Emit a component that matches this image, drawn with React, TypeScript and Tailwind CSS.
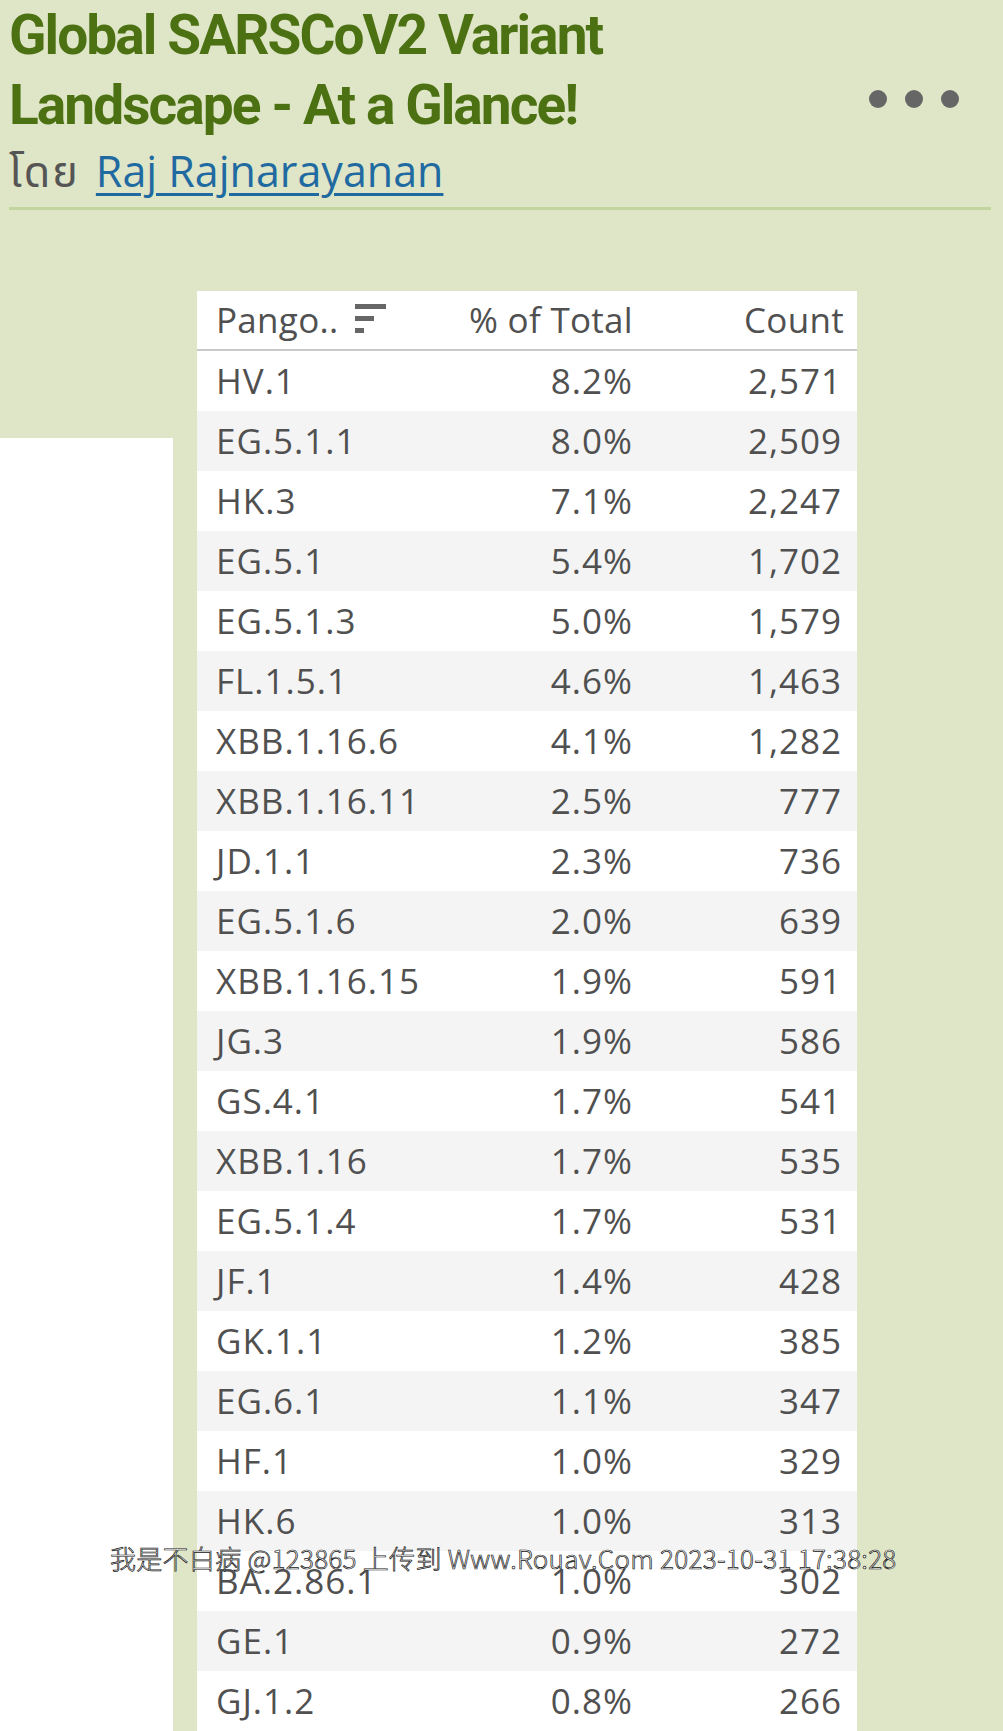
import React from "react";

const rows: [string, string, string][] = [
  ["HV.1", "8.2%", "2,571"],
  ["EG.5.1.1", "8.0%", "2,509"],
  ["HK.3", "7.1%", "2,247"],
  ["EG.5.1", "5.4%", "1,702"],
  ["EG.5.1.3", "5.0%", "1,579"],
  ["FL.1.5.1", "4.6%", "1,463"],
  ["XBB.1.16.6", "4.1%", "1,282"],
  ["XBB.1.16.11", "2.5%", "777"],
  ["JD.1.1", "2.3%", "736"],
  ["EG.5.1.6", "2.0%", "639"],
  ["XBB.1.16.15", "1.9%", "591"],
  ["JG.3", "1.9%", "586"],
  ["GS.4.1", "1.7%", "541"],
  ["XBB.1.16", "1.7%", "535"],
  ["EG.5.1.4", "1.7%", "531"],
  ["JF.1", "1.4%", "428"],
  ["GK.1.1", "1.2%", "385"],
  ["EG.6.1", "1.1%", "347"],
  ["HF.1", "1.0%", "329"],
  ["HK.6", "1.0%", "313"],
  ["BA.2.86.1", "1.0%", "302"],
  ["GE.1", "0.9%", "272"],
  ["GJ.1.2", "0.8%", "266"],
];

function SortIcon() {
  return (
    <svg width="32" height="30" viewBox="0 0 32 30" className="ml-[16px] mt-[-2px] shrink-0">
      <rect x="0" y="0" width="31" height="5" fill="#666" />
      <rect x="0" y="12" width="19" height="5" fill="#666" />
      <rect x="0" y="24" width="9" height="5" fill="#666" />
    </svg>
  );
}

export default function App() {
  return (
    <div className="relative w-[1003px] h-[1731px] overflow-hidden bg-[#dfe5c7] flex flex-col">
      {/* Header */}
      <div className="pl-[9px] pr-[12px]">
        <div className="flex items-start">
          <h1
            className="text-[55px] leading-[70px] font-bold tracking-[-0.035em] text-[#4b7112]"
            style={{ fontFamily: "Roboto, 'Liberation Sans', sans-serif" }}
          >
            Global SARSCoV2 Variant
            <br />
            Landscape - At a Glance!
          </h1>
          <div className="ml-auto mr-[32px] mt-[90px] flex gap-[18px]">
            <span className="w-[18px] h-[18px] rounded-full bg-[#666666]" />
            <span className="w-[18px] h-[18px] rounded-full bg-[#666666]" />
            <span className="w-[18px] h-[18px] rounded-full bg-[#666666]" />
          </div>
        </div>
        <div
          className="mt-[3px] text-[43px] leading-[56px] text-[#555555] flex items-baseline"
          style={{ fontFamily: "'Open Sans', 'Noto Sans Thai', 'Noto Sans', 'DejaVu Sans', sans-serif" }}
        >
          <span className="tracking-[2px]">โดย</span>
          <a className="ml-[16px] text-[#1f6aa1] underline decoration-[3px] underline-offset-[6px]">
            Raj Rajnarayanan
          </a>
        </div>
        <div className="mt-[8px] h-[3px] bg-[#c3d59e]" />
      </div>

      {/* Body */}
      <div className="flex flex-1 pt-[81px] items-stretch">
        <div className="w-[173px] mt-[147px] bg-white shrink-0" />
        <div
          className="ml-[24px] w-[660px] text-[35px] text-[#505050]"
          style={{ fontFamily: "'Open Sans', 'Noto Sans', sans-serif" }}
        >
          <div className="h-[60px] bg-white border-b-[2px] border-[#c9c9c9] flex items-center tracking-[0.3px]">
            <div className="w-[260px] pl-[19px] flex items-center">
              <span>Pango..</span>
              <SortIcon />
            </div>
            <div className="w-[176px] text-right">% of Total</div>
            <div className="flex-1 text-right pr-[13px]">Count</div>
          </div>
          {rows.map((r, i) => (
            <div
              key={r[0]}
              className={`h-[60px] flex items-center tracking-[1px] ${i % 2 === 1 ? "bg-[#f4f4f4]" : "bg-white"}`}
            >
              <div className="w-[260px] pl-[19px]">{r[0]}</div>
              <div className="w-[176px] text-right">{r[1]}</div>
              <div className="flex-1 text-right pr-[15px]">{r[2]}</div>
            </div>
          ))}
        </div>
      </div>

      {/* Watermark overlay */}
      <div
        className="absolute left-[110px] top-[1542px] text-[26px] leading-[32px] font-light whitespace-nowrap text-white tracking-[0.3px] [-webkit-text-stroke:0.7px_#111]"
        style={{ fontFamily: "'Noto Sans CJK SC', 'Liberation Sans', sans-serif" }}
      >
        我是不白病 @123865 上传到 Www.Rouav.Com 2023-10-31 17:38:28
      </div>
    </div>
  );
}
